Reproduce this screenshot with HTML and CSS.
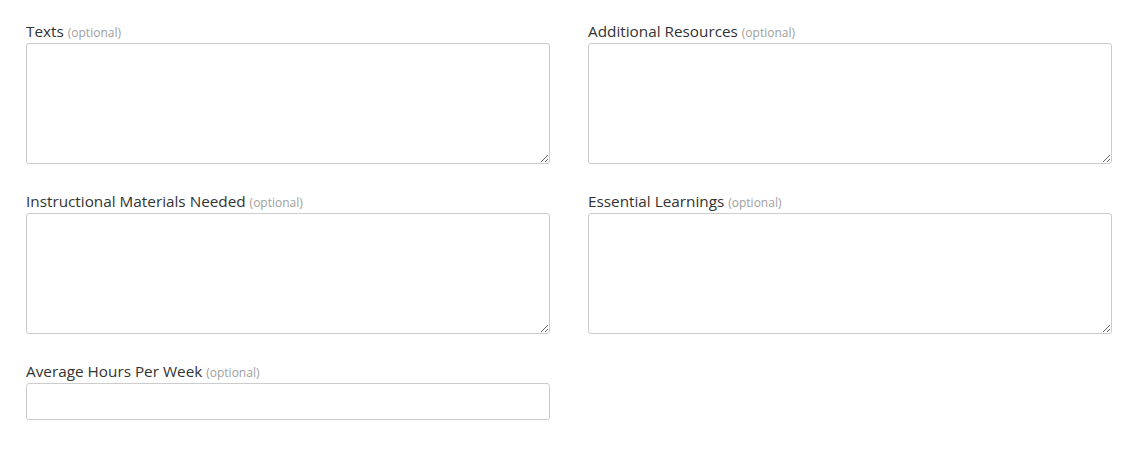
FILE: index.html
```html
<!DOCTYPE html>
<html>
<head>
<meta charset="utf-8">
<link rel="stylesheet" href="styles.css">
</head>
<body>
<form class="form">
  <div class="grid">
    <div class="field">
      <label class="label">Texts <span class="opt">(optional)</span></label>
      <textarea class="area"></textarea>
    </div>
    <div class="field">
      <label class="label">Additional Resources <span class="opt">(optional)</span></label>
      <textarea class="area"></textarea>
    </div>
    <div class="field">
      <label class="label">Instructional Materials Needed <span class="opt">(optional)</span></label>
      <textarea class="area"></textarea>
    </div>
    <div class="field">
      <label class="label">Essential Learnings <span class="opt">(optional)</span></label>
      <textarea class="area"></textarea>
    </div>
    <div class="field">
      <label class="label">Average Hours Per Week <span class="opt">(optional)</span></label>
      <input class="input" type="text">
    </div>
  </div>
</form>
</body>
</html>
```
FILE: styles.css
```css
html, body {
  margin: 0;
  padding: 0;
  background: #fff;
}
body {
  font-family: "Open Sans", "Liberation Sans", sans-serif;
  color: #333;
}
.form {
  padding: 20px 24px 0 26px;
}
.grid {
  display: grid;
  grid-template-columns: 1fr 1fr;
  column-gap: 38px;
  row-gap: 26px;
  align-items: start;
}
.field {
  display: flex;
  flex-direction: column;
}
.label {
  display: block;
  height: 20px;
  font-size: 15.3px;
  line-height: 22px;
  margin-bottom: 3px;
  color: #333;
  white-space: nowrap;
}
.opt {
  font-size: 12px;
  line-height: 1;
  color: #a0a0a0;
}
.area, .input {
  display: block;
  box-sizing: border-box;
  width: 100%;
  border: 1px solid #ccc;
  border-radius: 3px;
  background: #fff;
  font-family: inherit;
  font-size: 14px;
  margin: 0;
  padding: 6px 12px;
  outline: none;
}
.area {
  height: 121px;
  resize: vertical;
}
.input {
  height: 37px;
}
```
